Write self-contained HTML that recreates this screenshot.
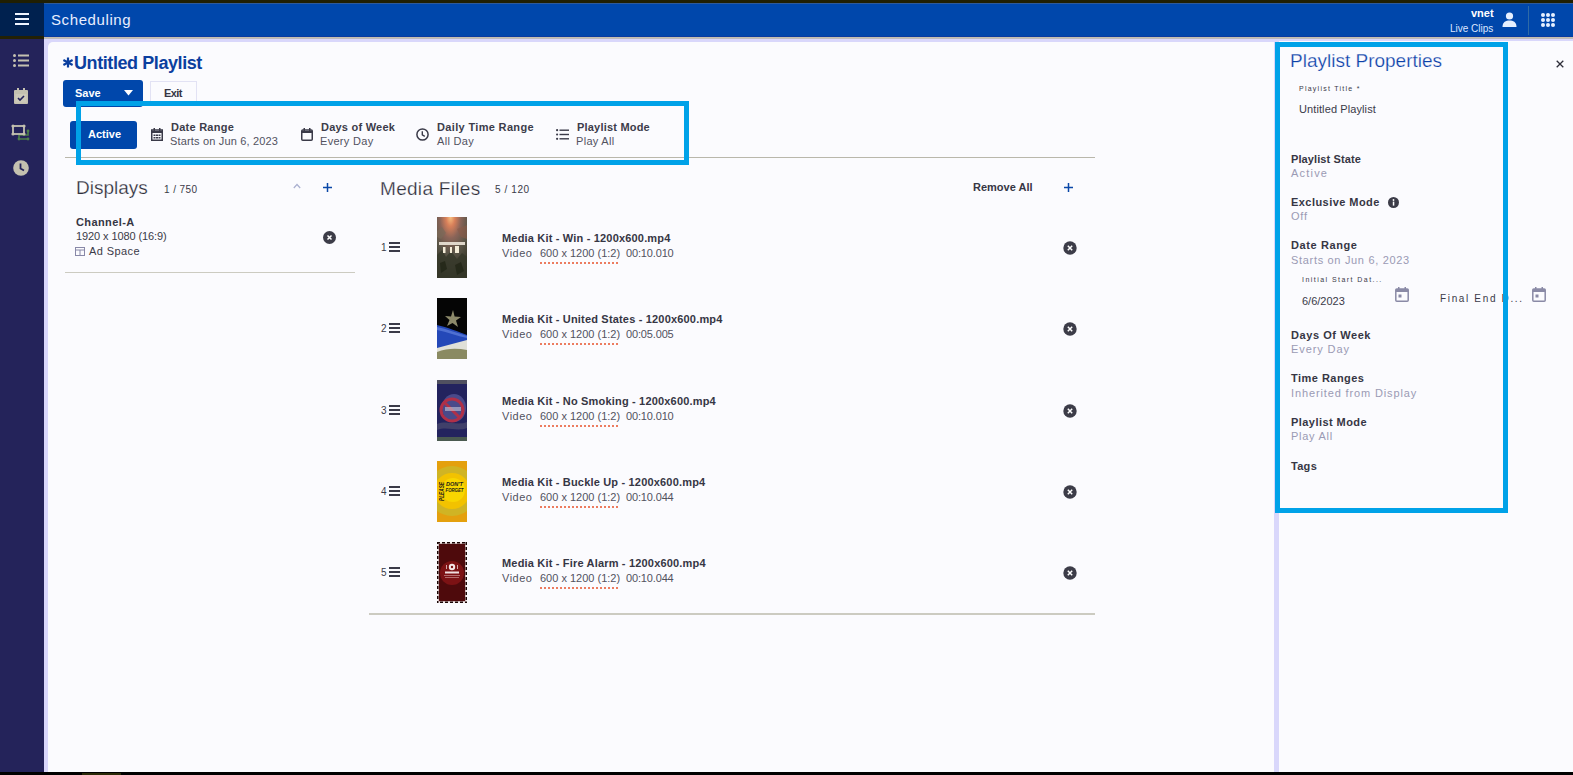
<!DOCTYPE html>
<html><head><meta charset="utf-8">
<style>
*{box-sizing:border-box;margin:0;padding:0}
html,body{width:1573px;height:775px;overflow:hidden;background:#fbfbfe;font-family:"Liberation Sans",sans-serif;color:#2e2e3a}
.abs{position:absolute}
#topline{left:0;top:0;width:1573px;height:3px;background:#201f02}
#header{left:0;top:3px;width:1573px;height:34px;background:#0047ab}
#hsq{left:0;top:3px;width:44px;height:34px;background:#00214f}
#hline{left:0;top:36px;width:44px;height:3px;background:#232104}
#hgray{left:44px;top:37px;width:1529px;height:2px;background:linear-gradient(#c8c2a8,#b8b8c4)}
#sidebar{left:0;top:39px;width:44px;height:736px;background:#24235a}
#lav{left:44px;top:39px;width:1529px;height:737px;background:#d9d7fb}
#card{left:48px;top:42px;width:1226px;height:730px;background:#fbfbfe;border-top-left-radius:5px}
#rpanel{left:1279px;top:41px;width:294px;height:731px;background:#fbfbfe}
#botline{left:0;top:772px;width:1573px;height:3px;background:#000}
.t{position:absolute;white-space:nowrap;line-height:1}
.hl{position:absolute;border:5px solid #00a2e8}
</style></head><body>
<div id="topline" class="abs"></div>
<div id="header" class="abs"></div>
<div class="abs" style="left:44px;top:3px;width:1529px;height:1px;background:#2f5a98"></div><div class="abs" style="left:44px;top:36px;width:1529px;height:1px;background:#0a3aa0"></div><div id="hsq" class="abs"></div>
<div id="hline" class="abs"></div>
<div id="lav" class="abs"></div>
<div id="hgray" class="abs"></div>
<div id="sidebar" class="abs"></div>
<div id="card" class="abs"></div>
<div id="rpanel" class="abs"></div>
<div id="botline" class="abs"></div><div class="abs" style="left:82px;top:773px;width:39px;height:2px;background:#2a2a08"></div>


<!-- header content -->
<svg class="abs" style="left:15px;top:13px" width="14" height="12" viewBox="0 0 14 12"><rect x="0" y="0" width="14" height="2" fill="#eef4ff"/><rect x="0" y="5" width="14" height="2" fill="#eef4ff"/><rect x="0" y="10" width="14" height="2" fill="#eef4ff"/></svg>
<div class="t" id="sched" style="left:51px;top:12px;font-size:15px;color:#e8eeff;font-weight:normal;letter-spacing:0.6px">Scheduling</div>
<div class="t" id="vnet" style="left:1471px;top:8px;font-size:11px;color:#fff;font-weight:bold">vnet</div>
<div class="t" id="live" style="left:1450px;top:24px;font-size:10px;color:#dde6ff">Live Clips</div>
<svg class="abs" style="left:1502px;top:12px" width="15" height="15" viewBox="0 0 15 15"><circle cx="7.5" cy="4" r="3.6" fill="#e6f0ff"/><path d="M0.5 15 C0.5 10 4 8.6 7.5 8.6 C11 8.6 14.5 10 14.5 15 Z" fill="#e6f0ff"/></svg>
<div class="abs" style="left:1528px;top:6px;width:1px;height:29px;background:#2f6aa6"></div>
<svg class="abs" style="left:1541px;top:13px" width="14" height="14" viewBox="0 0 14 14" fill="#e6f0ff"><circle cx="2" cy="2" r="2"/><circle cx="7" cy="2" r="2"/><circle cx="12" cy="2" r="2"/><circle cx="2" cy="7" r="2"/><circle cx="7" cy="7" r="2"/><circle cx="12" cy="7" r="2"/><circle cx="2" cy="12" r="2"/><circle cx="7" cy="12" r="2"/><circle cx="12" cy="12" r="2"/></svg>

<!-- sidebar icons -->
<svg class="abs" style="left:13px;top:54px" width="16" height="13" viewBox="0 0 16 13" fill="#c4c1b0"><circle cx="1.5" cy="1.5" r="1.5"/><circle cx="1.5" cy="6.5" r="1.5"/><circle cx="1.5" cy="11.5" r="1.5"/><rect x="5" y="0.5" width="11" height="2"/><rect x="5" y="5.5" width="11" height="2"/><rect x="5" y="10.5" width="11" height="2"/></svg>
<svg class="abs" style="left:14px;top:88px" width="14" height="16" viewBox="0 0 14 16"><rect x="0" y="2" width="14" height="14" rx="1" fill="#c4c1b0"/><rect x="3" y="0" width="2" height="4" fill="#c4c1b0"/><rect x="9" y="0" width="2" height="4" fill="#c4c1b0"/><rect x="1.5" y="6" width="11" height="8.5" fill="#cdcaba"/><path d="M4 10 L6 12 L10 8" stroke="#24235a" stroke-width="1.6" fill="none"/></svg>
<svg class="abs" style="left:11px;top:124px" width="20" height="17" viewBox="0 0 20 17"><path d="M8 11 H17 V7 M17 15 H8 V11" stroke="#4c7f4a" stroke-width="1.6" fill="none"/><circle cx="17" cy="7" r="1.4" fill="#4c7f4a"/><circle cx="17" cy="15" r="1.4" fill="#4c7f4a"/><circle cx="8" cy="15" r="1.4" fill="#4c7f4a"/><rect x="2" y="2" width="11" height="8" stroke="#c4c1b0" stroke-width="1.8" fill="none"/><circle cx="2" cy="2" r="1.6" fill="#c4c1b0"/><circle cx="13" cy="2" r="1.6" fill="#c4c1b0"/><circle cx="2" cy="10" r="1.6" fill="#c4c1b0"/><circle cx="13" cy="10" r="1.6" fill="#c4c1b0"/></svg>
<svg class="abs" style="left:13px;top:160px" width="16" height="16" viewBox="0 0 16 16"><circle cx="8" cy="8" r="7.8" fill="#c4c1b0"/><path d="M7.5 3.5 V8.5 L11 10.5" stroke="#24235a" stroke-width="1.8" fill="none"/></svg>

<!-- title + buttons -->
<svg class="abs" style="left:62px;top:57px" width="12" height="11" viewBox="0 0 12 11"><path d="M6 0.5 V10.5 M1.4 3 L10.6 8 M10.6 3 L1.4 8" stroke="#0b3f9f" stroke-width="2.2"/></svg><div class="t" id="title" style="left:74px;top:54px;font-size:18px;letter-spacing:-0.42px;font-weight:bold;color:#0b3f9f">Untitled Playlist</div>
<div class="abs" style="left:63px;top:80px;width:80px;height:27px;background:#0047ab;border-radius:3px"></div>
<div class="t" id="save" style="left:75px;top:88px;font-size:11px;font-weight:bold;color:#fff;letter-spacing:0">Save</div>
<svg class="abs" style="left:124px;top:90px" width="9" height="6" viewBox="0 0 9 6"><path d="M0 0 H9 L4.5 5.5 Z" fill="#fff"/></svg>
<div class="abs" style="left:150px;top:81px;width:47px;height:25px;border:1px solid #e2e2f4;border-bottom:none;background:#fbfbfe"></div>
<div class="t" id="exit" style="left:164px;top:88px;font-size:11px;font-weight:bold;color:#363644;letter-spacing:-0.6px">Exit</div>

<!-- filter bar -->
<div class="abs" style="left:70px;top:121px;width:67px;height:28px;background:#0047ab;border-radius:3px"></div>
<div class="t" id="active" style="left:88px;top:129px;font-size:11px;font-weight:bold;color:#fff">Active</div>


<svg class="abs" style="left:151px;top:128px" width="12" height="13" viewBox="0 0 12 13"><rect x="0.75" y="2" width="10.5" height="10.25" fill="none" stroke="#3a3a48" stroke-width="1.5"/><rect x="2.5" y="0" width="1.5" height="3" fill="#3a3a48"/><rect x="8" y="0" width="1.5" height="3" fill="#3a3a48"/><rect x="0.75" y="3" width="10.5" height="2" fill="#3a3a48"/><g fill="#3a3a48"><rect x="2.5" y="6.5" width="2" height="1.5"/><rect x="5" y="6.5" width="2" height="1.5"/><rect x="7.5" y="6.5" width="2" height="1.5"/><rect x="2.5" y="9" width="2" height="1.5"/><rect x="5" y="9" width="2" height="1.5"/><rect x="7.5" y="9" width="2" height="1.5"/></g></svg>
<div class="t" id="dr1" style="left:171px;top:122px;font-size:11px;font-weight:bold;color:#3c3c4a;letter-spacing:0.25px">Date Range</div>
<div class="t" id="dr2" style="left:170px;top:136px;font-size:11px;color:#52525e;letter-spacing:0.17px">Starts on Jun 6, 2023</div>
<svg class="abs" style="left:301px;top:128px" width="12" height="13" viewBox="0 0 12 13"><rect x="0.75" y="2" width="10.5" height="10.25" rx="1" fill="none" stroke="#3a3a48" stroke-width="1.5"/><rect x="2.5" y="0" width="1.5" height="3" fill="#3a3a48"/><rect x="8" y="0" width="1.5" height="3" fill="#3a3a48"/><rect x="0.75" y="3" width="10.5" height="2" fill="#3a3a48"/></svg>
<div class="t" id="dw1" style="left:321px;top:122px;font-size:11px;font-weight:bold;color:#3c3c4a;letter-spacing:0.23px">Days of Week</div>
<div class="t" id="dw2" style="left:320px;top:136px;font-size:11px;color:#52525e;letter-spacing:0.3px">Every Day</div>
<svg class="abs" style="left:416px;top:128px" width="13" height="13" viewBox="0 0 13 13"><circle cx="6.5" cy="6.5" r="5.6" fill="none" stroke="#3a3a48" stroke-width="1.5"/><path d="M6.3 3.2 V6.8 L8.8 8.3" stroke="#3a3a48" stroke-width="1.4" fill="none"/></svg>
<div class="t" id="dt1" style="left:437px;top:122px;font-size:11px;font-weight:bold;color:#3c3c4a;letter-spacing:0.34px">Daily Time Range</div>
<div class="t" id="dt2" style="left:437px;top:136px;font-size:11px;color:#52525e;letter-spacing:0.3px">All Day</div>
<svg class="abs" style="left:556px;top:129px" width="13" height="11" viewBox="0 0 13 11" fill="#3a3a48"><circle cx="1.1" cy="1.2" r="1.1"/><circle cx="1.1" cy="5.5" r="1.1"/><circle cx="1.1" cy="9.8" r="1.1"/><rect x="3.5" y="0.5" width="9.5" height="1.4"/><rect x="3.5" y="4.8" width="9.5" height="1.4"/><rect x="3.5" y="9.1" width="9.5" height="1.4"/></svg>
<div class="t" id="pm1" style="left:577px;top:122px;font-size:11px;font-weight:bold;color:#3c3c4a;letter-spacing:0.2px">Playlist Mode</div>
<div class="t" id="pm2" style="left:576px;top:136px;font-size:11px;color:#52525e;letter-spacing:0.3px">Play All</div>
<div class="abs" style="left:65px;top:157px;width:1030px;height:1px;background:#b9b7ab"></div>

<!-- displays -->
<div class="t" id="disp" style="left:76px;top:178px;font-size:19px;color:#2e2e3a;-webkit-text-stroke:0.25px #fbfbfe">Displays</div>
<div class="t" id="disp2" style="left:164px;top:185px;font-size:10px;color:#3a3a48;letter-spacing:0.4px">1 / 750</div>
<svg class="abs" style="left:293px;top:183px" width="8" height="6" viewBox="0 0 8 6"><path d="M0.8 5 L4 1.5 L7.2 5" stroke="#aab0d0" stroke-width="1.2" fill="none"/></svg>
<svg class="abs" style="left:323px;top:183px" width="9" height="9" viewBox="0 0 9 9"><rect x="3.75" y="0" width="1.5" height="9" fill="#0a47a8"/><rect x="0" y="3.75" width="9" height="1.5" fill="#0a47a8"/></svg>
<div class="t" id="ch1" style="left:76px;top:217px;font-size:11px;font-weight:bold;color:#363644;letter-spacing:0.4px">Channel-A</div>
<div class="t" id="ch2" style="left:76px;top:231px;font-size:11px;color:#3a3a48;letter-spacing:-0.1px">1920 x 1080 (16:9)</div>
<svg class="abs" style="left:75px;top:247px" width="10" height="9" viewBox="0 0 10 9"><rect x="0.5" y="0.5" width="9" height="8" fill="none" stroke="#8888a8" stroke-width="1"/><path d="M0.5 3 H9.5 M5 3 V8.5" stroke="#8888a8" stroke-width="1" fill="none"/></svg>
<div class="t" id="ch3" style="left:89px;top:246px;font-size:11px;color:#3a3a48;letter-spacing:0.4px">Ad Space</div>
<svg class="abs" style="left:323px;top:231px" width="13" height="13" viewBox="0 0 13 13"><circle cx="6.5" cy="6.5" r="6.5" fill="#3c3c48"/><path d="M4.5 4.5 L8.5 8.5 M8.5 4.5 L4.5 8.5" stroke="#fff" stroke-width="1.5"/></svg>
<div class="abs" style="left:65px;top:272px;width:290px;height:1px;background:#cccbc1"></div>

<!-- media files -->
<div class="t" id="mf" style="left:380px;top:179px;font-size:19px;color:#2e2e3a;letter-spacing:0.3px;-webkit-text-stroke:0.25px #fbfbfe">Media Files</div>
<div class="t" id="mf2" style="left:495px;top:185px;font-size:10px;color:#3a3a48;letter-spacing:0.6px">5 / 120</div>
<div class="t" id="rmall" style="left:973px;top:182px;font-size:11px;font-weight:bold;color:#363644;letter-spacing:0">Remove All</div>
<svg class="abs" style="left:1064px;top:183px" width="9" height="9" viewBox="0 0 9 9"><rect x="3.75" y="0" width="1.5" height="9" fill="#0a47a8"/><rect x="0" y="3.75" width="9" height="1.5" fill="#0a47a8"/></svg>
<div class="abs" style="left:369px;top:613px;width:726px;height:2px;background:#cccbc1"></div>


<!-- media rows -->
<div class="t" id="rn0" style="left:381px;top:243px;font-size:10px;color:#3a3a48">1</div>
<svg class="abs" style="left:389px;top:242px" width="11" height="10" viewBox="0 0 11 10" fill="#3a3a48"><rect y="0" width="11" height="2"/><rect y="4" width="11" height="2"/><rect y="8" width="11" height="2"/></svg>
<div class="abs" style="left:437px;top:217px;width:30px;height:61px"><svg width="30" height="61" viewBox="0 0 30 61"><defs><radialGradient id="g1" cx="0.45" cy="0" r="1.0"><stop offset="0" stop-color="#f8c080"/><stop offset="0.15" stop-color="#d8805a"/><stop offset="0.35" stop-color="#8a6458"/><stop offset="0.6" stop-color="#5a5548"/><stop offset="1" stop-color="#2a2a1c"/></radialGradient></defs><rect width="30" height="61" fill="url(#g1)"/><path d="M0 14 L5 10 L9 16 L4 22 L0 20Z" fill="#7a6a58" opacity="0.7"/><path d="M20 12 L30 8 V22 L24 20Z" fill="#8a5a48" opacity="0.6"/><path d="M0 38 L5 33 L9 40 L14 34 L20 42 L25 36 L30 40 V61 H0Z" fill="#36382a" opacity="0.85"/><path d="M3 46 L8 44 L10 52 L4 56Z M18 48 L24 45 L27 54 L20 58Z" fill="#222516" opacity="0.8"/><rect x="2" y="25" width="26" height="3" fill="#ece4d8" opacity="0.9"/><rect x="6" y="30" width="2.5" height="6" fill="#f4ecd8"/><rect x="13" y="30" width="2" height="6" fill="#f4ecd8"/><rect x="18" y="29" width="4" height="7" fill="#f4ecd8"/></svg></div>
<div class="t" id="mt0" style="left:502px;top:233px;font-size:11px;font-weight:bold;color:#363644;letter-spacing:0.18px">Media Kit - Win - 1200x600.mp4</div>
<div class="t" id="mv0" style="left:502px;top:248px;font-size:11px;color:#52525e;letter-spacing:0.5px">Video</div>
<div class="t" id="ms0" style="left:540px;top:248px;font-size:11px;color:#52525e">600 x 1200 (1:2)</div>
<div class="abs" style="left:540px;top:262px;width:80px;height:2px;background:repeating-linear-gradient(90deg,#ec7c60 0 2.5px,transparent 2.5px 4px)"></div>
<div class="t" id="md0" style="left:626px;top:248px;font-size:11px;color:#52525e;letter-spacing:-0.15px">00:10.010</div>
<svg class="abs" style="left:1063px;top:241px" width="14" height="14" viewBox="0 0 14 14"><circle cx="7" cy="7" r="6.7" fill="#3c3c48"/><path d="M4.8 4.8 L9.2 9.2 M9.2 4.8 L4.8 9.2" stroke="#fff" stroke-width="1.5"/></svg>
<div class="t" id="rn1" style="left:381px;top:324px;font-size:10px;color:#3a3a48">2</div>
<svg class="abs" style="left:389px;top:323px" width="11" height="10" viewBox="0 0 11 10" fill="#3a3a48"><rect y="0" width="11" height="2"/><rect y="4" width="11" height="2"/><rect y="8" width="11" height="2"/></svg>
<div class="abs" style="left:437px;top:298px;width:30px;height:61px"><svg width="30" height="61" viewBox="0 0 30 61"><rect width="30" height="61" fill="#050505"/><polygon points="16,12 17.6,18.5 24,19 19,22.5 21,29 15.5,25 10,28 12.5,22 8,18 14,18.5" fill="#8d8a6a"/><path d="M0 27 C10 29 22 34 30 37 V43 L12 50 L0 52 Z" fill="#2448b8"/><path d="M0 29 C10 31 20 35 30 38 V40 C20 38 10 34 0 32Z" fill="#5a7ad8" opacity="0.8"/><path d="M0 50 L30 42 V52 L0 55Z" fill="#e0e0d8"/><path d="M0 54 C10 50 20 50 30 52 V61 H0Z" fill="#8a8a62"/></svg></div>
<div class="t" id="mt1" style="left:502px;top:314px;font-size:11px;font-weight:bold;color:#363644;letter-spacing:0.18px">Media Kit - United States - 1200x600.mp4</div>
<div class="t" id="mv1" style="left:502px;top:329px;font-size:11px;color:#52525e;letter-spacing:0.5px">Video</div>
<div class="t" id="ms1" style="left:540px;top:329px;font-size:11px;color:#52525e">600 x 1200 (1:2)</div>
<div class="abs" style="left:540px;top:343px;width:80px;height:2px;background:repeating-linear-gradient(90deg,#ec7c60 0 2.5px,transparent 2.5px 4px)"></div>
<div class="t" id="md1" style="left:626px;top:329px;font-size:11px;color:#52525e;letter-spacing:-0.15px">00:05.005</div>
<svg class="abs" style="left:1063px;top:322px" width="14" height="14" viewBox="0 0 14 14"><circle cx="7" cy="7" r="6.7" fill="#3c3c48"/><path d="M4.8 4.8 L9.2 9.2 M9.2 4.8 L4.8 9.2" stroke="#fff" stroke-width="1.5"/></svg>
<div class="t" id="rn2" style="left:381px;top:406px;font-size:10px;color:#3a3a48">3</div>
<svg class="abs" style="left:389px;top:405px" width="11" height="10" viewBox="0 0 11 10" fill="#3a3a48"><rect y="0" width="11" height="2"/><rect y="4" width="11" height="2"/><rect y="8" width="11" height="2"/></svg>
<div class="abs" style="left:437px;top:380px;width:30px;height:61px"><svg width="30" height="61" viewBox="0 0 30 61"><rect width="30" height="61" fill="#23235e"/><rect y="0" width="30" height="4" fill="#505060"/><rect y="57" width="30" height="4" fill="#4a5a50"/><ellipse cx="17" cy="28" rx="12" ry="14" fill="#4a4a8a"/><circle cx="15" cy="30" r="11" fill="none" stroke="#b03048" stroke-width="3"/><path d="M7 22 L23 38" stroke="#b03048" stroke-width="3"/><rect x="8" y="27" width="16" height="4" fill="#c8c8d8" opacity="0.6"/><path d="M0 44 C10 40 20 46 30 42 V48 C20 52 10 46 0 50Z" fill="#40406a"/></svg></div>
<div class="t" id="mt2" style="left:502px;top:396px;font-size:11px;font-weight:bold;color:#363644;letter-spacing:0.18px">Media Kit - No Smoking - 1200x600.mp4</div>
<div class="t" id="mv2" style="left:502px;top:411px;font-size:11px;color:#52525e;letter-spacing:0.5px">Video</div>
<div class="t" id="ms2" style="left:540px;top:411px;font-size:11px;color:#52525e">600 x 1200 (1:2)</div>
<div class="abs" style="left:540px;top:425px;width:80px;height:2px;background:repeating-linear-gradient(90deg,#ec7c60 0 2.5px,transparent 2.5px 4px)"></div>
<div class="t" id="md2" style="left:626px;top:411px;font-size:11px;color:#52525e;letter-spacing:-0.15px">00:10.010</div>
<svg class="abs" style="left:1063px;top:404px" width="14" height="14" viewBox="0 0 14 14"><circle cx="7" cy="7" r="6.7" fill="#3c3c48"/><path d="M4.8 4.8 L9.2 9.2 M9.2 4.8 L4.8 9.2" stroke="#fff" stroke-width="1.5"/></svg>
<div class="t" id="rn3" style="left:381px;top:487px;font-size:10px;color:#3a3a48">4</div>
<svg class="abs" style="left:389px;top:486px" width="11" height="10" viewBox="0 0 11 10" fill="#3a3a48"><rect y="0" width="11" height="2"/><rect y="4" width="11" height="2"/><rect y="8" width="11" height="2"/></svg>
<div class="abs" style="left:437px;top:461px;width:30px;height:61px"><svg width="30" height="61" viewBox="0 0 30 61"><rect width="30" height="61" fill="#e4a00e"/><circle cx="15" cy="30" r="25" fill="#d0b424"/><circle cx="15" cy="30" r="18" fill="#f2c200"/><circle cx="16" cy="29" r="12" fill="#f8d600"/><text transform="translate(6.8,40) rotate(-90)" font-family="Liberation Sans" font-weight="bold" font-style="italic" font-size="6.5" fill="#1a1a1a" textLength="19" lengthAdjust="spacingAndGlyphs">PLEASE</text><text x="9" y="25" font-family="Liberation Sans" font-weight="bold" font-style="italic" font-size="5" fill="#1a1a1a" textLength="17" lengthAdjust="spacingAndGlyphs">DON'T</text><text x="8.5" y="30.5" font-family="Liberation Sans" font-weight="bold" font-style="italic" font-size="5" fill="#1a1a1a" textLength="18" lengthAdjust="spacingAndGlyphs">FORGET</text></svg></div>
<div class="t" id="mt3" style="left:502px;top:477px;font-size:11px;font-weight:bold;color:#363644;letter-spacing:0.18px">Media Kit - Buckle Up - 1200x600.mp4</div>
<div class="t" id="mv3" style="left:502px;top:492px;font-size:11px;color:#52525e;letter-spacing:0.5px">Video</div>
<div class="t" id="ms3" style="left:540px;top:492px;font-size:11px;color:#52525e">600 x 1200 (1:2)</div>
<div class="abs" style="left:540px;top:506px;width:80px;height:2px;background:repeating-linear-gradient(90deg,#ec7c60 0 2.5px,transparent 2.5px 4px)"></div>
<div class="t" id="md3" style="left:626px;top:492px;font-size:11px;color:#52525e;letter-spacing:-0.15px">00:10.044</div>
<svg class="abs" style="left:1063px;top:485px" width="14" height="14" viewBox="0 0 14 14"><circle cx="7" cy="7" r="6.7" fill="#3c3c48"/><path d="M4.8 4.8 L9.2 9.2 M9.2 4.8 L4.8 9.2" stroke="#fff" stroke-width="1.5"/></svg>
<div class="t" id="rn4" style="left:381px;top:568px;font-size:10px;color:#3a3a48">5</div>
<svg class="abs" style="left:389px;top:567px" width="11" height="10" viewBox="0 0 11 10" fill="#3a3a48"><rect y="0" width="11" height="2"/><rect y="4" width="11" height="2"/><rect y="8" width="11" height="2"/></svg>
<div class="abs" style="left:437px;top:542px;width:30px;height:61px"><svg width="30" height="61" viewBox="0 0 30 61"><rect width="30" height="61" fill="#f4ecec"/><rect x="0" y="0" width="30" height="61" fill="none" stroke="#1a0606" stroke-width="3" stroke-dasharray="3 2"/><rect x="1.8" y="1.8" width="26.4" height="57.4" fill="#4e0a0c"/><circle cx="15" cy="31" r="12" fill="#7c1214"/><circle cx="15" cy="25" r="3.2" fill="#f4e8e8"/><circle cx="15" cy="25" r="1.2" fill="#7c1214"/><path d="M9.5 23 V27 M20.5 23 V27" stroke="#e8d0d0" stroke-width="0.8"/><rect x="8" y="29.5" width="14" height="2" fill="#f0e0e0"/><rect x="7" y="33" width="16" height="0.8" fill="#c08080"/><rect x="8" y="35" width="14" height="0.8" fill="#c08080"/></svg></div>
<div class="t" id="mt4" style="left:502px;top:558px;font-size:11px;font-weight:bold;color:#363644;letter-spacing:0.18px">Media Kit - Fire Alarm - 1200x600.mp4</div>
<div class="t" id="mv4" style="left:502px;top:573px;font-size:11px;color:#52525e;letter-spacing:0.5px">Video</div>
<div class="t" id="ms4" style="left:540px;top:573px;font-size:11px;color:#52525e">600 x 1200 (1:2)</div>
<div class="abs" style="left:540px;top:587px;width:80px;height:2px;background:repeating-linear-gradient(90deg,#ec7c60 0 2.5px,transparent 2.5px 4px)"></div>
<div class="t" id="md4" style="left:626px;top:573px;font-size:11px;color:#52525e;letter-spacing:-0.15px">00:10.044</div>
<svg class="abs" style="left:1063px;top:566px" width="14" height="14" viewBox="0 0 14 14"><circle cx="7" cy="7" r="6.7" fill="#3c3c48"/><path d="M4.8 4.8 L9.2 9.2 M9.2 4.8 L4.8 9.2" stroke="#fff" stroke-width="1.5"/></svg>


<!-- right panel -->
<div class="t" id="pp" style="left:1290px;top:51px;font-size:19px;color:#0b40a8;-webkit-text-stroke:0.25px #fbfbfe">Playlist Properties</div>
<svg class="abs" style="left:1556px;top:60px" width="8" height="8" viewBox="0 0 8 8"><path d="M0.7 0.7 L7.3 7.3 M7.3 0.7 L0.7 7.3" stroke="#2e2e3a" stroke-width="1.3"/></svg>
<div class="t" id="ptl" style="left:1299px;top:85px;font-size:7px;color:#3a3a48;letter-spacing:1.25px">Playlist Title *</div>
<div class="t" id="ptv" style="left:1299px;top:104px;font-size:11px;color:#3a3a48;letter-spacing:0.1px">Untitled Playlist</div>
<div class="t" id="ps1" style="left:1291px;top:154px;font-size:11px;font-weight:bold;color:#363644;letter-spacing:0.1px">Playlist State</div>
<div class="t" id="ps2" style="left:1291px;top:168px;font-size:11px;color:#9a9ab4;letter-spacing:1.2px">Active</div>
<div class="t" id="em1" style="left:1291px;top:197px;font-size:11px;font-weight:bold;color:#363644;letter-spacing:0.45px">Exclusive Mode</div>
<svg class="abs" style="left:1388px;top:197px" width="11" height="11" viewBox="0 0 11 11"><circle cx="5.5" cy="5.5" r="5.5" fill="#3c3c48"/><rect x="4.8" y="4.6" width="1.5" height="4" fill="#fff"/><circle cx="5.5" cy="3" r="0.9" fill="#fff"/></svg>
<div class="t" id="em2" style="left:1291px;top:211px;font-size:11px;color:#9a9ab4;letter-spacing:0.8px">Off</div>
<div class="t" id="rd1" style="left:1291px;top:240px;font-size:11px;font-weight:bold;color:#363644;letter-spacing:0.6px">Date Range</div>
<div class="t" id="rd2" style="left:1291px;top:255px;font-size:11px;color:#9a9ab4;letter-spacing:0.68px">Starts on Jun 6, 2023</div>
<div class="t" id="isd" style="left:1302px;top:276px;font-size:7px;color:#3a3a48;letter-spacing:1.45px">Initial Start Dat...</div>
<div class="t" id="isv" style="left:1302px;top:296px;font-size:11px;color:#3a3a48">6/6/2023</div>
<svg class="abs" style="left:1395px;top:287px" width="14" height="15" viewBox="0 0 14 15"><rect x="0.8" y="2" width="12.4" height="12.2" rx="1" fill="none" stroke="#8a8aa6" stroke-width="1.5"/><rect x="0.8" y="2" width="12.4" height="3" fill="#8a8aa6"/><rect x="3" y="0" width="1.5" height="3" fill="#8a8aa6"/><rect x="9.5" y="0" width="1.5" height="3" fill="#8a8aa6"/><rect x="3.5" y="7.5" width="3" height="3" fill="#8a8aa6"/></svg>
<div class="t" id="fed" style="left:1440px;top:294px;font-size:10px;color:#3a3a48;letter-spacing:1.65px">Final End D...</div>
<svg class="abs" style="left:1532px;top:287px" width="14" height="15" viewBox="0 0 14 15"><rect x="0.8" y="2" width="12.4" height="12.2" rx="1" fill="none" stroke="#8a8aa6" stroke-width="1.5"/><rect x="0.8" y="2" width="12.4" height="3" fill="#8a8aa6"/><rect x="3" y="0" width="1.5" height="3" fill="#8a8aa6"/><rect x="9.5" y="0" width="1.5" height="3" fill="#8a8aa6"/><rect x="3.5" y="7.5" width="3" height="3" fill="#8a8aa6"/></svg>
<div class="t" id="dow1" style="left:1291px;top:330px;font-size:11px;font-weight:bold;color:#363644;letter-spacing:0.57px">Days Of Week</div>
<div class="t" id="dow2" style="left:1291px;top:344px;font-size:11px;color:#9a9ab4;letter-spacing:0.9px">Every Day</div>
<div class="t" id="tr1" style="left:1291px;top:373px;font-size:11px;font-weight:bold;color:#363644;letter-spacing:0.47px">Time Ranges</div>
<div class="t" id="tr2" style="left:1291px;top:388px;font-size:11px;color:#9a9ab4;letter-spacing:0.87px">Inherited from Display</div>
<div class="t" id="pmo1" style="left:1291px;top:417px;font-size:11px;font-weight:bold;color:#363644;letter-spacing:0.44px">Playlist Mode</div>
<div class="t" id="pmo2" style="left:1291px;top:431px;font-size:11px;color:#9a9ab4;letter-spacing:0.73px">Play All</div>
<div class="t" id="tags" style="left:1291px;top:461px;font-size:11px;font-weight:bold;color:#363644;letter-spacing:0.3px">Tags</div>

<!-- highlight boxes -->
<div class="hl" style="left:76px;top:101px;width:613px;height:64px"></div>
<div class="hl" style="left:1275px;top:42px;width:233px;height:471px"></div>
</body></html>
